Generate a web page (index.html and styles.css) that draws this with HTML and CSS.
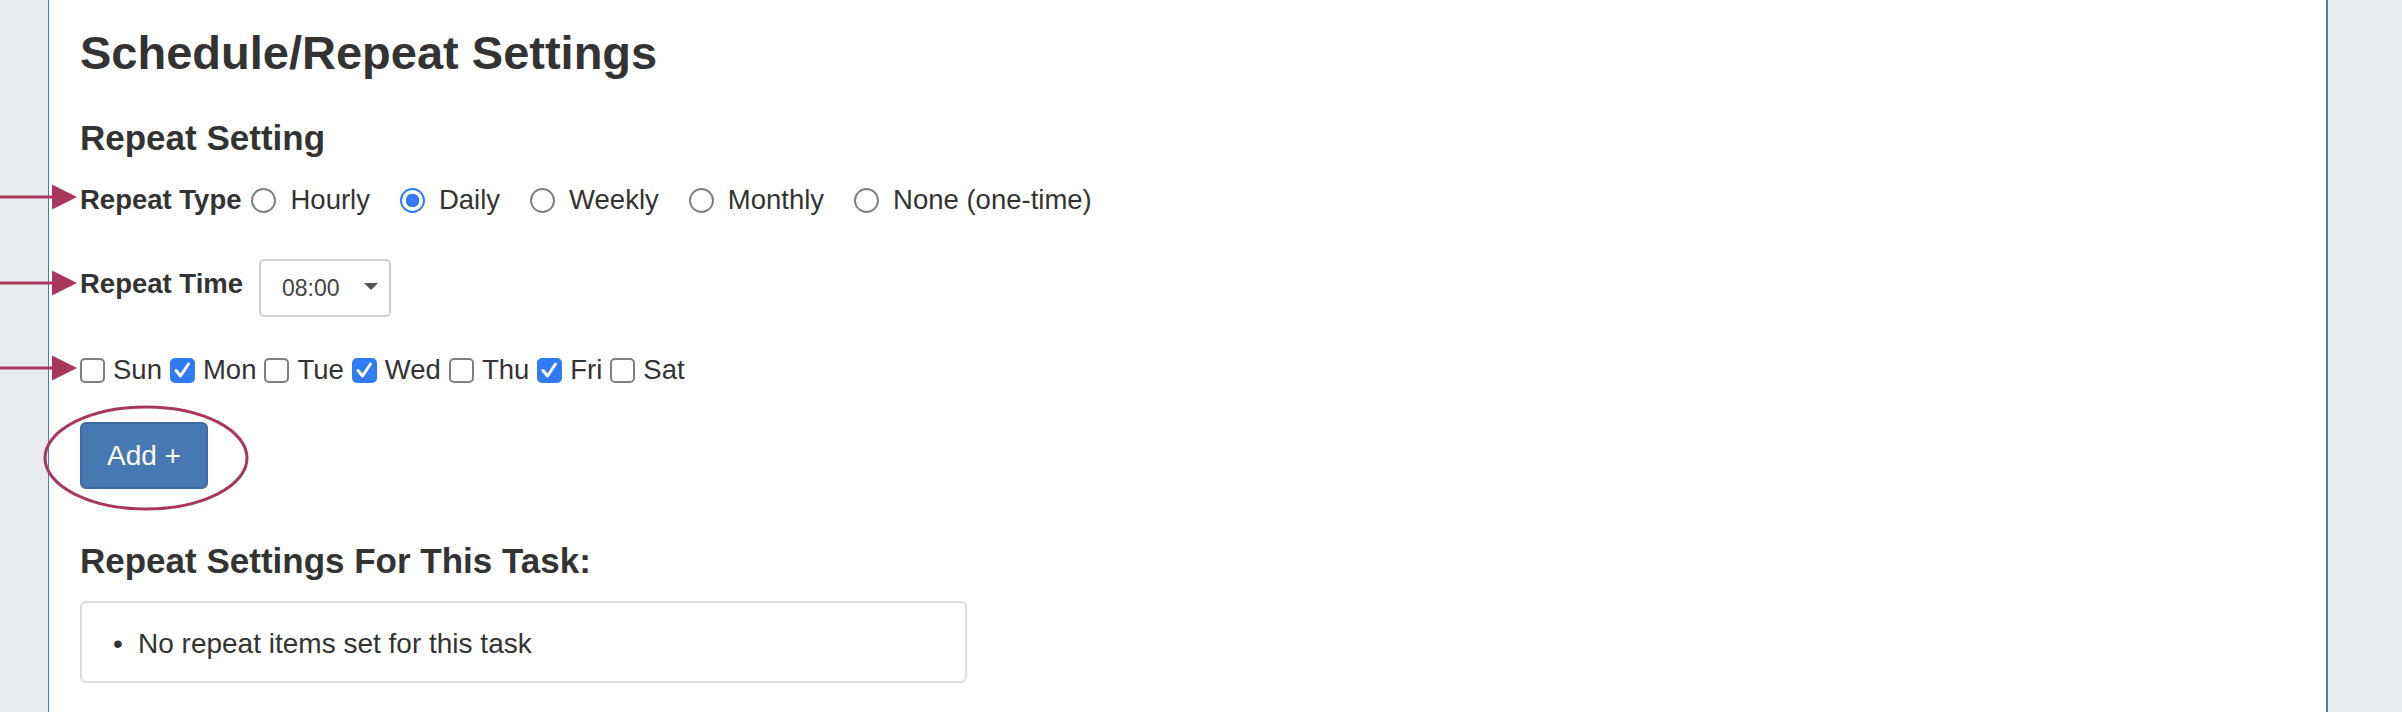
FILE: index.html
```html
<!DOCTYPE html>
<html lang="en">
<head>
	<meta charset="UTF-8">
	<title>Schedule/Repeat Settings</title>
	<link rel="stylesheet" href="styles.css">
</head>
<body>
	<div class="page">
		<div class="panel">
			<h1 class="title">Schedule/Repeat Settings</h1>
			<h3 class="subtitle">Repeat Setting</h3>

			<!-- repeat type -->
			<div class="field field-type">
				<span class="field-label">Repeat Type</span>
				<label class="opt"><input type="radio" name="rtype"> Hourly</label>
				<label class="opt"><input type="radio" name="rtype" checked> Daily</label>
				<label class="opt"><input type="radio" name="rtype"> Weekly</label>
				<label class="opt"><input type="radio" name="rtype"> Monthly</label>
				<label class="opt"><input type="radio" name="rtype"> None (one-time)</label>
			</div>

			<!-- repeat time -->
			<div class="field field-time">
				<span class="field-label">Repeat Time</span>
				<div class="select">
					<span class="select-value">08:00</span>
					<i class="caret"></i>
				</div>
			</div>

			<!-- days -->
			<div class="field field-days">
				<label class="day"><input type="checkbox"> Sun</label>
				<label class="day"><input type="checkbox" checked> Mon</label>
				<label class="day"><input type="checkbox"> Tue</label>
				<label class="day"><input type="checkbox" checked> Wed</label>
				<label class="day"><input type="checkbox"> Thu</label>
				<label class="day"><input type="checkbox" checked> Fri</label>
				<label class="day"><input type="checkbox"> Sat</label>
			</div>

			<button class="btn-add" type="button">Add +</button>

			<h3 class="subtitle subtitle-list">Repeat Settings For This Task:</h3>
			<ul class="repeat-list">
				<li>No repeat items set for this task</li>
			</ul>
		</div>

		<!-- annotations -->
		<svg class="marks" width="2402" height="712" viewBox="0 0 2402 712">
			<g fill="#a8375d">
				<rect x="0" y="195.5" width="56" height="3"/>
				<polygon points="52,184.5 77,197 52,209.5"/>
				<rect x="0" y="281.5" width="56" height="3"/>
				<polygon points="52,270.5 77,283 52,295.5"/>
				<rect x="0" y="366.5" width="56" height="3"/>
				<polygon points="52,355.5 77,368 52,380.5"/>
			</g>
			<ellipse cx="146" cy="458" rx="101" ry="51" fill="none" stroke="#a8375d" stroke-width="3"/>
		</svg>
	</div>
</body>
</html>
```

FILE: styles.css
```css
* {
	margin: 0;
	padding: 0;
	box-sizing: border-box;
}
html, body {
	height: 100%;
}
body {
	background: #e9ecef;
	font-family: "Liberation Sans", Arial, sans-serif;
	color: #333;
	overflow: hidden;
}
.page {
	position: relative;
	height: 712px;
	padding-left: 48px;
}
.panel {
	width: 2280px;
	height: 100%;
	background: #fff;
	border-left: 1px solid #4a7bb9;
	border-right: 2px solid #4a7bb9;
	padding: 26px 0 0 31px;
}

/* headings */
.title {
	font-size: 47px;
	line-height: 54px;
	font-weight: bold;
}
.subtitle {
	font-size: 35px;
	line-height: 40px;
	font-weight: bold;
	margin-top: 38px;
}
.subtitle-list {
	margin-top: 52px;
}

/* rows */
.field {
	display: flex;
	align-items: center;
	font-size: 27.5px;
	line-height: 30px;
}
.field-type {
	margin-top: 27px;
}
.field-time {
	margin-top: 44px;
	align-items: flex-start;
}
.field-days {
	margin-top: 38px;
}
.field-label {
	font-weight: bold;
}
.field-time .field-label {
	margin-top: 10px;
}

/* radios */
.opt {
	display: flex;
	align-items: center;
	margin-left: 10px;
	margin-right: 20px;
}
.opt input {
	-webkit-appearance: none;
	appearance: none;
	width: 25px;
	height: 25px;
	border: 2px solid #808080;
	border-radius: 50%;
	margin-right: 14px;
	background: #fff;
}
.opt input:checked {
	border-color: #2f7cf6;
	background: radial-gradient(circle, #2f7cf6 0 6.5px, #fff 7px);
}

/* select */
.select {
	display: flex;
	align-items: center;
	width: 132px;
	height: 58px;
	margin-left: 16px;
	padding-left: 21px;
	border: 2px solid #d0d0d0;
	border-radius: 5px;
	background: #fff;
}
.select-value {
	font-size: 23px;
	color: #444;
}
.caret {
	margin-left: 24px;
	margin-top: -4px;
	width: 0;
	height: 0;
	border-left: 7.5px solid transparent;
	border-right: 7.5px solid transparent;
	border-top: 7px solid #555;
}

/* checkboxes */
.day {
	display: flex;
	align-items: center;
	margin-right: 8px;
}
.day input {
	-webkit-appearance: none;
	appearance: none;
	width: 25px;
	height: 25px;
	border: 2px solid #808080;
	border-radius: 5px;
	margin-right: 8px;
	background: #fff;
}
.day input:checked {
	border-color: #2f7cf6;
	background: #2f7cf6 url("data:image/svg+xml,%3Csvg xmlns='http://www.w3.org/2000/svg' viewBox='0 0 21 21'%3E%3Cpath d='M4 10.5l4.5 5.5 8-12' fill='none' stroke='%23fff' stroke-width='3' stroke-linecap='round' stroke-linejoin='round'/%3E%3C/svg%3E") center/100% no-repeat;
}

/* button */
.btn-add {
	display: block;
	margin-top: 37px;
	height: 67px;
	padding: 0 25px;
	font-family: inherit;
	font-size: 28px;
	color: #fff;
	background: #4678b1;
	border: 2px solid #3c6aa2;
	border-radius: 6px;
}

/* list box */
.repeat-list {
	list-style: none;
	margin-top: 20px;
	width: 887px;
	border: 2px solid #ddd;
	border-radius: 6px;
	padding: 26px 0 22px 31px;
	font-size: 28px;
	line-height: 30px;
}
.repeat-list li::before {
	content: "\2022";
	display: inline-block;
	width: 25px;
}

.marks {
	position: absolute;
	left: 0;
	top: 0;
	pointer-events: none;
}
```
